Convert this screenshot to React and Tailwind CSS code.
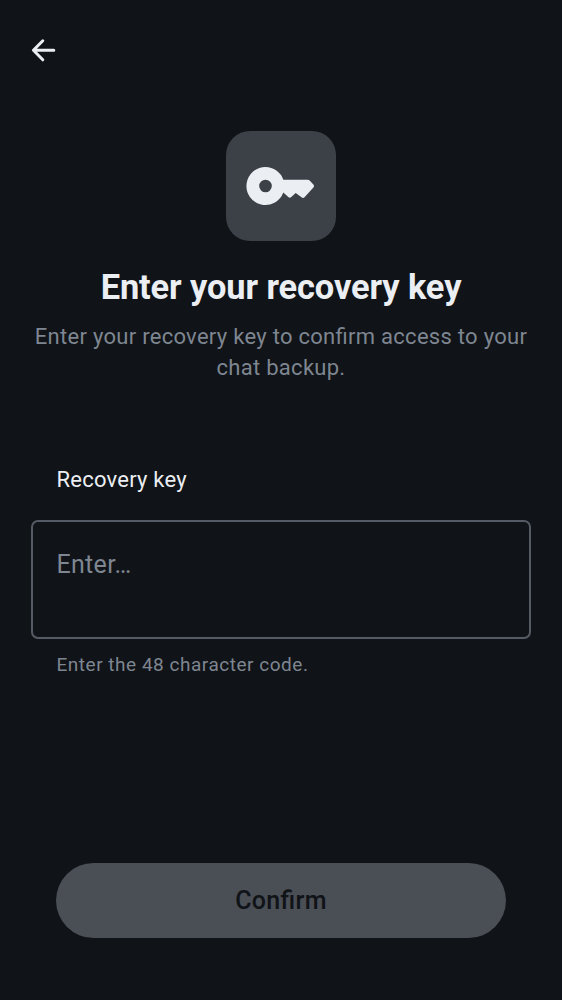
export default function App() {
  return (
    <main className="flex h-[1000px] w-[562px] flex-col bg-[#101317] font-['Roboto',sans-serif] text-[#ebeef2] [font-feature-settings:'liga'_1]">
      <header className="flex h-[100px] items-center pl-[31px]">
        <button aria-label="Back">
          <svg className="block h-[25px] w-[25px]" viewBox="0 0 25 25" fill="none" stroke="currentColor" strokeWidth="3" strokeLinecap="round" strokeLinejoin="round">
            <path d="M11.8 2.8 2.4 12.3 11.8 21.8M2.7 12.3h20.1" />
          </svg>
        </button>
      </header>
      <section className="flex flex-col items-center pt-[31px] text-center">
        <div className="flex h-[110px] w-[110px] items-center justify-center rounded-[24px] bg-[#3b4147]">
          <svg className="block h-[110px] w-[110px]" viewBox="0 0 110 110" fill="#ebeef2">
            <path fillRule="evenodd" d="M39.5 36a19 19 0 1 0 17.8 25.5l5 4.6q1.5 1.3 3 0l4.4-4.2 5.8 4.4q1.5 1.2 3 0l8.9-9.8q1.2-1.5 0-3l-3.8-4q-.8-.8-2-.8H57.3A19 19 0 0 0 39.5 36Zm0 12.7a6.3 6.3 0 1 1 0 12.6 6.3 6.3 0 0 1 0-12.6Z" />
          </svg>
        </div>
        <h1 className="mt-[24px] text-[34.4px] leading-[44px] font-bold tracking-[-0.1px] whitespace-nowrap">Enter your recovery key</h1>
        <p className="mt-[12px] text-[22px] leading-[31px] tracking-[0.28px] text-[#7e8691]">Enter your recovery key to confirm access to your<br />chat backup.</p>
      </section>
      <section className="mt-[81px] px-[31px]">
        <label htmlFor="key" className="block pl-[25.5px] text-[22px] leading-[31px] tracking-[0.22px]">Recovery key</label>
        <textarea id="key" placeholder="Enter…" className="mt-[25px] block h-[119px] w-[500px] resize-none rounded-[7px] border-2 border-[#555b64] px-[23.5px] py-[24px] text-[25px] leading-[37px] tracking-[0.3px] outline-none placeholder:text-[#7e8691]" />
        <p className="mt-[12px] pl-[25.5px] text-[19px] leading-[28px] tracking-[0.52px] text-[#7e8691]">Enter the 48 character code.</p>
      </section>
      <footer className="mt-auto px-[56px] pb-[62.5px]">
        <button disabled className="h-[75px] w-[450px] rounded-full bg-[#4a4e55] pt-px text-[25px] font-medium tracking-[0.35px] text-[#101317]">Confirm</button>
      </footer>
    </main>
  );
}
